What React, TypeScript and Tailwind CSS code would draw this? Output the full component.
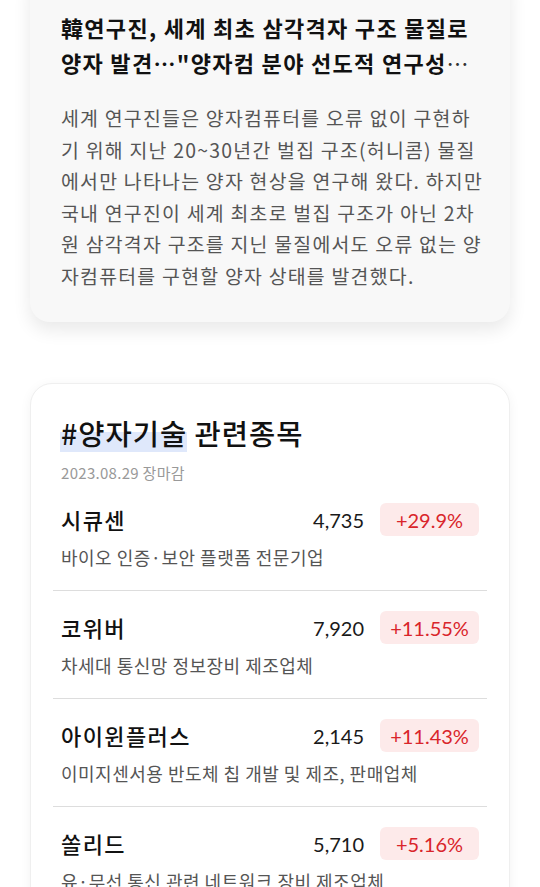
const kr = "font-['Noto_Sans_CJK_KR','Noto_Sans',sans-serif]"
const num = "font-['Lato','Noto_Sans_CJK_KR',sans-serif]"

interface Stock {
  name: string
  price: string
  change: string
  desc: string
}

const stocks: Stock[] = [
  { name: '시큐센', price: '4,735', change: '+29.9%', desc: '바이오 인증·보안 플랫폼 전문기업' },
  { name: '코위버', price: '7,920', change: '+11.55%', desc: '차세대 통신망 정보장비 제조업체' },
  { name: '아이윈플러스', price: '2,145', change: '+11.43%', desc: '이미지센서용 반도체 칩 개발 및 제조, 판매업체' },
  { name: '쏠리드', price: '5,710', change: '+5.16%', desc: '유·무선 통신 관련 네트워크 장비 제조업체' },
]

const bodyLines = [
  '세계 연구진들은 양자컴퓨터를 오류 없이 구현하',
  '기 위해 지난 20~30년간 벌집 구조(허니콤) 물질',
  '에서만 나타나는 양자 현상을 연구해 왔다. 하지만',
  '국내 연구진이 세계 최초로 벌집 구조가 아닌 2차',
  '원 삼각격자 구조를 지닌 물질에서도 오류 없는 양',
  '자컴퓨터를 구현할 양자 상태를 발견했다.',
]

function StockRow({ stock }: { stock: Stock }) {
  return (
    <div className="border-b border-[#dddddd] px-[8px] pt-[20px] pb-[21px]">
      <div className="flex h-[33px] items-center">
        <div className={`flex-1 text-[22px] leading-[33px] font-medium tracking-[1.4px] text-[#111] ${kr}`}>{stock.name}</div>
        <div className={`mr-[16px] text-[20px] text-[#1a1a1a] ${num}`}>{stock.price}</div>
        <div
          className={`flex h-[33px] w-[99px] items-center justify-center rounded-[6px] bg-[#fdeaea] text-[20px] text-[#d9252b] ${num}`}
        >
          {stock.change}
        </div>
      </div>
      <div className={`mt-[9px] text-[18px] leading-[24px] tracking-[0.5px] text-[#555] whitespace-nowrap ${kr}`}>
        {stock.desc}
      </div>
    </div>
  )
}

export default function App() {
  return (
    <div className="h-[887px] overflow-hidden bg-white">
      <div className="mx-[30px] mt-[-30px] rounded-[20px] bg-[#f8f8f8] px-[31px] pt-[40px] pb-[31px] shadow-[0_8px_18px_rgba(0,0,0,0.09)]">
        <div className={`text-[22px] leading-[35px] font-bold tracking-[1.3px] text-[#111] whitespace-nowrap ${kr}`}>
          <div>韓연구진, 세계 최초 삼각격자 구조 물질로</div>
          <div>
            양자 발견…"양자컴 분야 선도적 연구성<span className="font-normal text-[#333]">…</span>
          </div>
        </div>
        <div
          className={`mt-[22px] text-[19.4px] leading-[31.5px] tracking-[1.25px] text-[#555] whitespace-nowrap ${kr}`}
        >
          {bodyLines.map((line, i) => (
            <div key={i}>{line}</div>
          ))}
        </div>
      </div>

      <div className="mx-[30px] mt-[61px] rounded-[22px] border border-[#efefef] bg-white px-[22px] pt-[31px] shadow-[0_2px_12px_rgba(0,0,0,0.05)]">
        <div className="px-[8px]">
          <div className={`text-[28.5px] leading-[36px] font-medium tracking-[1px] text-[#111] ${kr}`}>
            <span className="relative isolate inline-block">
              <span className="absolute top-[17px] left-[-1px] right-[0px] -z-10 h-[20px] bg-[#dfe8fb]" />
              #양자기술
            </span>{' '}
            관련종목
          </div>
          <div className={`mt-[12px] text-[15px] leading-[20px] tracking-[0.3px] text-[#999] ${kr}`}>
            2023.08.29 장마감
          </div>
        </div>
        {stocks.map(s => (
          <StockRow key={s.name} stock={s} />
        ))}
      </div>
    </div>
  )
}
